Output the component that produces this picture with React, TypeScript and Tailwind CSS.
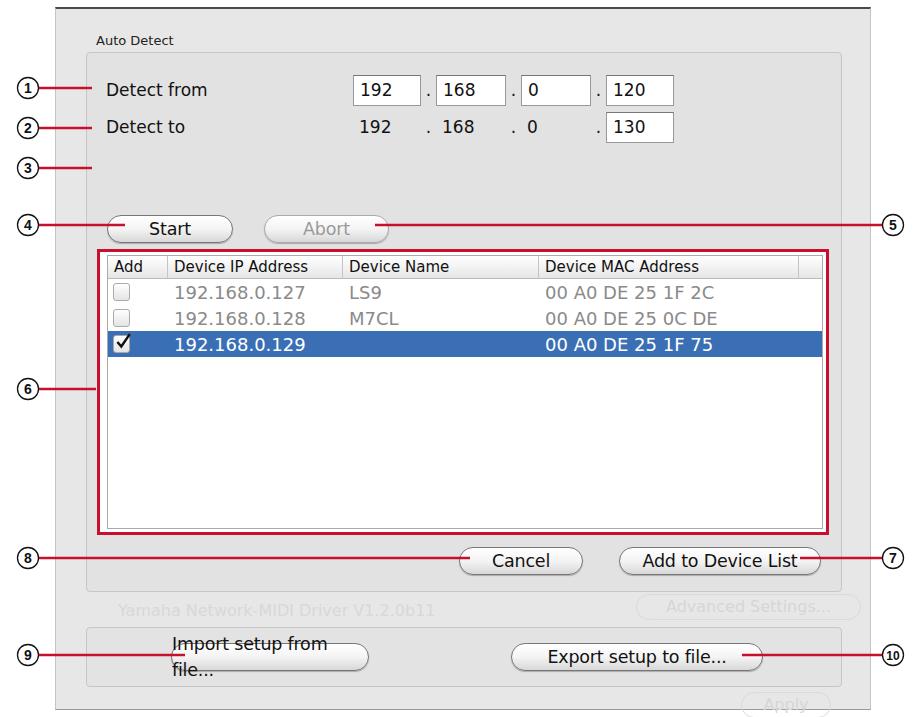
import React from "react";

const Btn = ({ label, w, dim }: { label: string; w: string; dim?: boolean }) => (
  <div
    className={`${w} h-[28px] rounded-full border flex items-center justify-center text-[17.5px] tracking-[-0.2px] bg-gradient-to-b from-white via-[#f4f4f4] to-[#d8d8d8] shadow-[0_1px_1px_rgba(0,0,0,0.25)] ${
      dim ? "border-[#aaa] text-[#9a9a9a]" : "border-[#777] text-[#111]"
    }`}
  >
    {label}
  </div>
);

const Box = ({ v, w = "w-[68px]" }: { v: string; w?: string }) => (
  <div className={`${w} h-[31px] bg-white border border-[#999] border-t-[#777] flex items-center pl-[6px] text-[17px]`}>{v}</div>
);

const rows = [
  { ip: "192.168.0.127", name: "LS9", mac: "00 A0 DE 25 1F 2C", sel: false },
  { ip: "192.168.0.128", name: "M7CL", mac: "00 A0 DE 25 0C DE", sel: false },
  { ip: "192.168.0.129", name: "", mac: "00 A0 DE 25 1F 75", sel: true },
];

const callouts: [number, number, number, number, number][] = [
  [1, 28, 88, 92, 0],
  [2, 28, 128, 92, 0],
  [3, 28, 168, 92, 0],
  [4, 28, 225, 125, 0],
  [5, 893, 225, 375, 1],
  [6, 28, 389, 96, 0],
  [7, 893, 558, 800, 1],
  [8, 28, 558, 470, 0],
  [9, 28, 655, 185, 0],
  [10, 893, 655, 742, 1],
];

export default function App() {
  return (
    <div className="relative w-[921px] h-[717px] bg-white overflow-hidden" style={{ fontFamily: '"DejaVu Sans", "Liberation Sans", sans-serif' }}>
      <div className="ml-[55px] mt-[7px] w-[816px] h-[703px] bg-[#e7e7e7] border-t-2 border-t-[#4a4a4a] border-x border-x-[#c4c4c4] border-b border-b-[#999] pt-[22px] pl-[30px] relative">
        <div className="absolute left-[62px] top-[588px] text-[16px] text-[#d8d8d8] leading-[27px]">
          <div>Yamaha Network-MIDI Driver V1.2.0b11</div>
          <div>Copyright(C) 2010 Yamaha Corporation.</div>
          <div>All Rights Reserved.</div>
        </div>
        <div className="absolute left-[580px] top-[585px] w-[225px] h-[26px] rounded-full border border-[#dadada] text-[#d6d6d6] text-[16px] flex items-center justify-center">Advanced Settings...</div>
        <div className="absolute left-[685px] top-[683px] w-[90px] h-[26px] rounded-full border border-[#dadada] text-[#d6d6d6] text-[16px] flex items-center justify-center">Apply</div>

        <div className="relative text-[13px] text-[#222] pl-[10px] h-[21px]">Auto Detect</div>
        <div className="relative w-[756px] h-[540px] rounded-[4px] border border-[#c6c6c6] bg-[#e2e2e2] pt-[22px] pl-[19px]">
          <div className="flex items-center h-[31px] text-[17px] text-[#111]">
            <div className="w-[247px]">Detect from</div>
            <Box v="192" />
            <span className="w-[15px] text-center">.</span>
            <Box v="168" w="w-[70px]" />
            <span className="w-[15px] text-center">.</span>
            <Box v="0" w="w-[70px]" />
            <span className="w-[15px] text-center">.</span>
            <Box v="120" />
          </div>
          <div className="flex items-center h-[31px] mt-[6px] text-[17px] text-[#111]">
            <div className="w-[247px]">Detect to</div>
            <div className="w-[68px] pl-[6px]">192</div>
            <span className="w-[15px] text-center">.</span>
            <div className="w-[70px] pl-[6px]">168</div>
            <span className="w-[15px] text-center">.</span>
            <div className="w-[70px] pl-[6px]">0</div>
            <span className="w-[15px] text-center">.</span>
            <Box v="130" />
          </div>
          <div className="flex gap-[31px] mt-[72px] ml-[1px]">
            <Btn label="Start" w="w-[126px]" />
            <Btn label="Abort" w="w-[125px]" dim />
          </div>
          <div className="-ml-[9px] mt-[6px] w-[732px] h-[286px] border-[3px] border-[#c8102e] bg-white p-[3px] pl-[7px]">
            <div className="w-full h-full border border-[#aaa] bg-white">
              <div className="flex h-[23px] border-b border-[#bbb] bg-gradient-to-b from-white to-[#e6e6e6] text-[15px] text-[#111] items-center">
                <div className="w-[60px] pl-[6px] border-r border-[#c4c4c4] h-full flex items-center">Add</div>
                <div className="w-[175px] pl-[6px] border-r border-[#c4c4c4] h-full flex items-center">Device IP Address</div>
                <div className="w-[196px] pl-[6px] border-r border-[#c4c4c4] h-full flex items-center">Device Name</div>
                <div className="w-[260px] pl-[6px] border-r border-[#c4c4c4] h-full flex items-center">Device MAC Address</div>
              </div>
              {rows.map((r) => (
                <div key={r.ip} className={`flex items-center h-[26px] text-[18px] ${r.sel ? "bg-[#3a6fb5] text-white" : "text-[#8a8a8a]"}`}>
                  <div className="w-[60px] pl-[5px]">
                    <div className="w-[17px] h-[18px] rounded-[3px] border border-[#aaa] bg-gradient-to-b from-white to-[#e4e4e4] relative">
                      {r.sel && (
                        <svg viewBox="0 0 16 16" className="absolute -top-[3px] left-0 w-[18px] h-[18px]">
                          <path d="M3 8 L6.5 12 L14 1" fill="none" stroke="#111" strokeWidth="2.2" />
                        </svg>
                      )}
                    </div>
                  </div>
                  <div className="w-[175px] pl-[6px]">{r.ip}</div>
                  <div className="w-[196px] pl-[6px]">{r.name}</div>
                  <div className="w-[260px] pl-[6px]">{r.mac}</div>
                </div>
              ))}
            </div>
          </div>
          <div className="flex gap-[36px] mt-[12px] ml-[353px]">
            <Btn label="Cancel" w="w-[124px]" />
            <Btn label="Add to Device List" w="w-[202px]" />
          </div>
        </div>
        <div className="relative mt-[35px] w-[756px] h-[60px] rounded-[4px] border border-[#c6c6c6] bg-[#e3e3e3] flex items-center">
          <div className="ml-[84px]"><Btn label="Import setup from file..." w="w-[198px]" /></div>
          <div className="ml-[142px]"><Btn label="Export setup to file..." w="w-[252px]" /></div>
        </div>
      </div>

      <svg className="absolute inset-0 pointer-events-none" width="921" height="717">
        {callouts.map(([n, cx, cy, x2, right]) => (
          <g key={n}>
            <line x1={right ? cx - 11 : cx + 11} y1={cy} x2={x2} y2={cy} stroke="#c8102e" strokeWidth="2.5" />
            <circle cx={cx} cy={cy} r="10.5" fill="white" stroke="#111" strokeWidth="1.3" />
            <text x={cx} y={cy + 5} textAnchor="middle" fontSize={n === 10 ? 12 : 14} fontWeight="bold" fill="#111" fontFamily="Liberation Sans, sans-serif">{n}</text>
          </g>
        ))}
      </svg>
    </div>
  );
}
